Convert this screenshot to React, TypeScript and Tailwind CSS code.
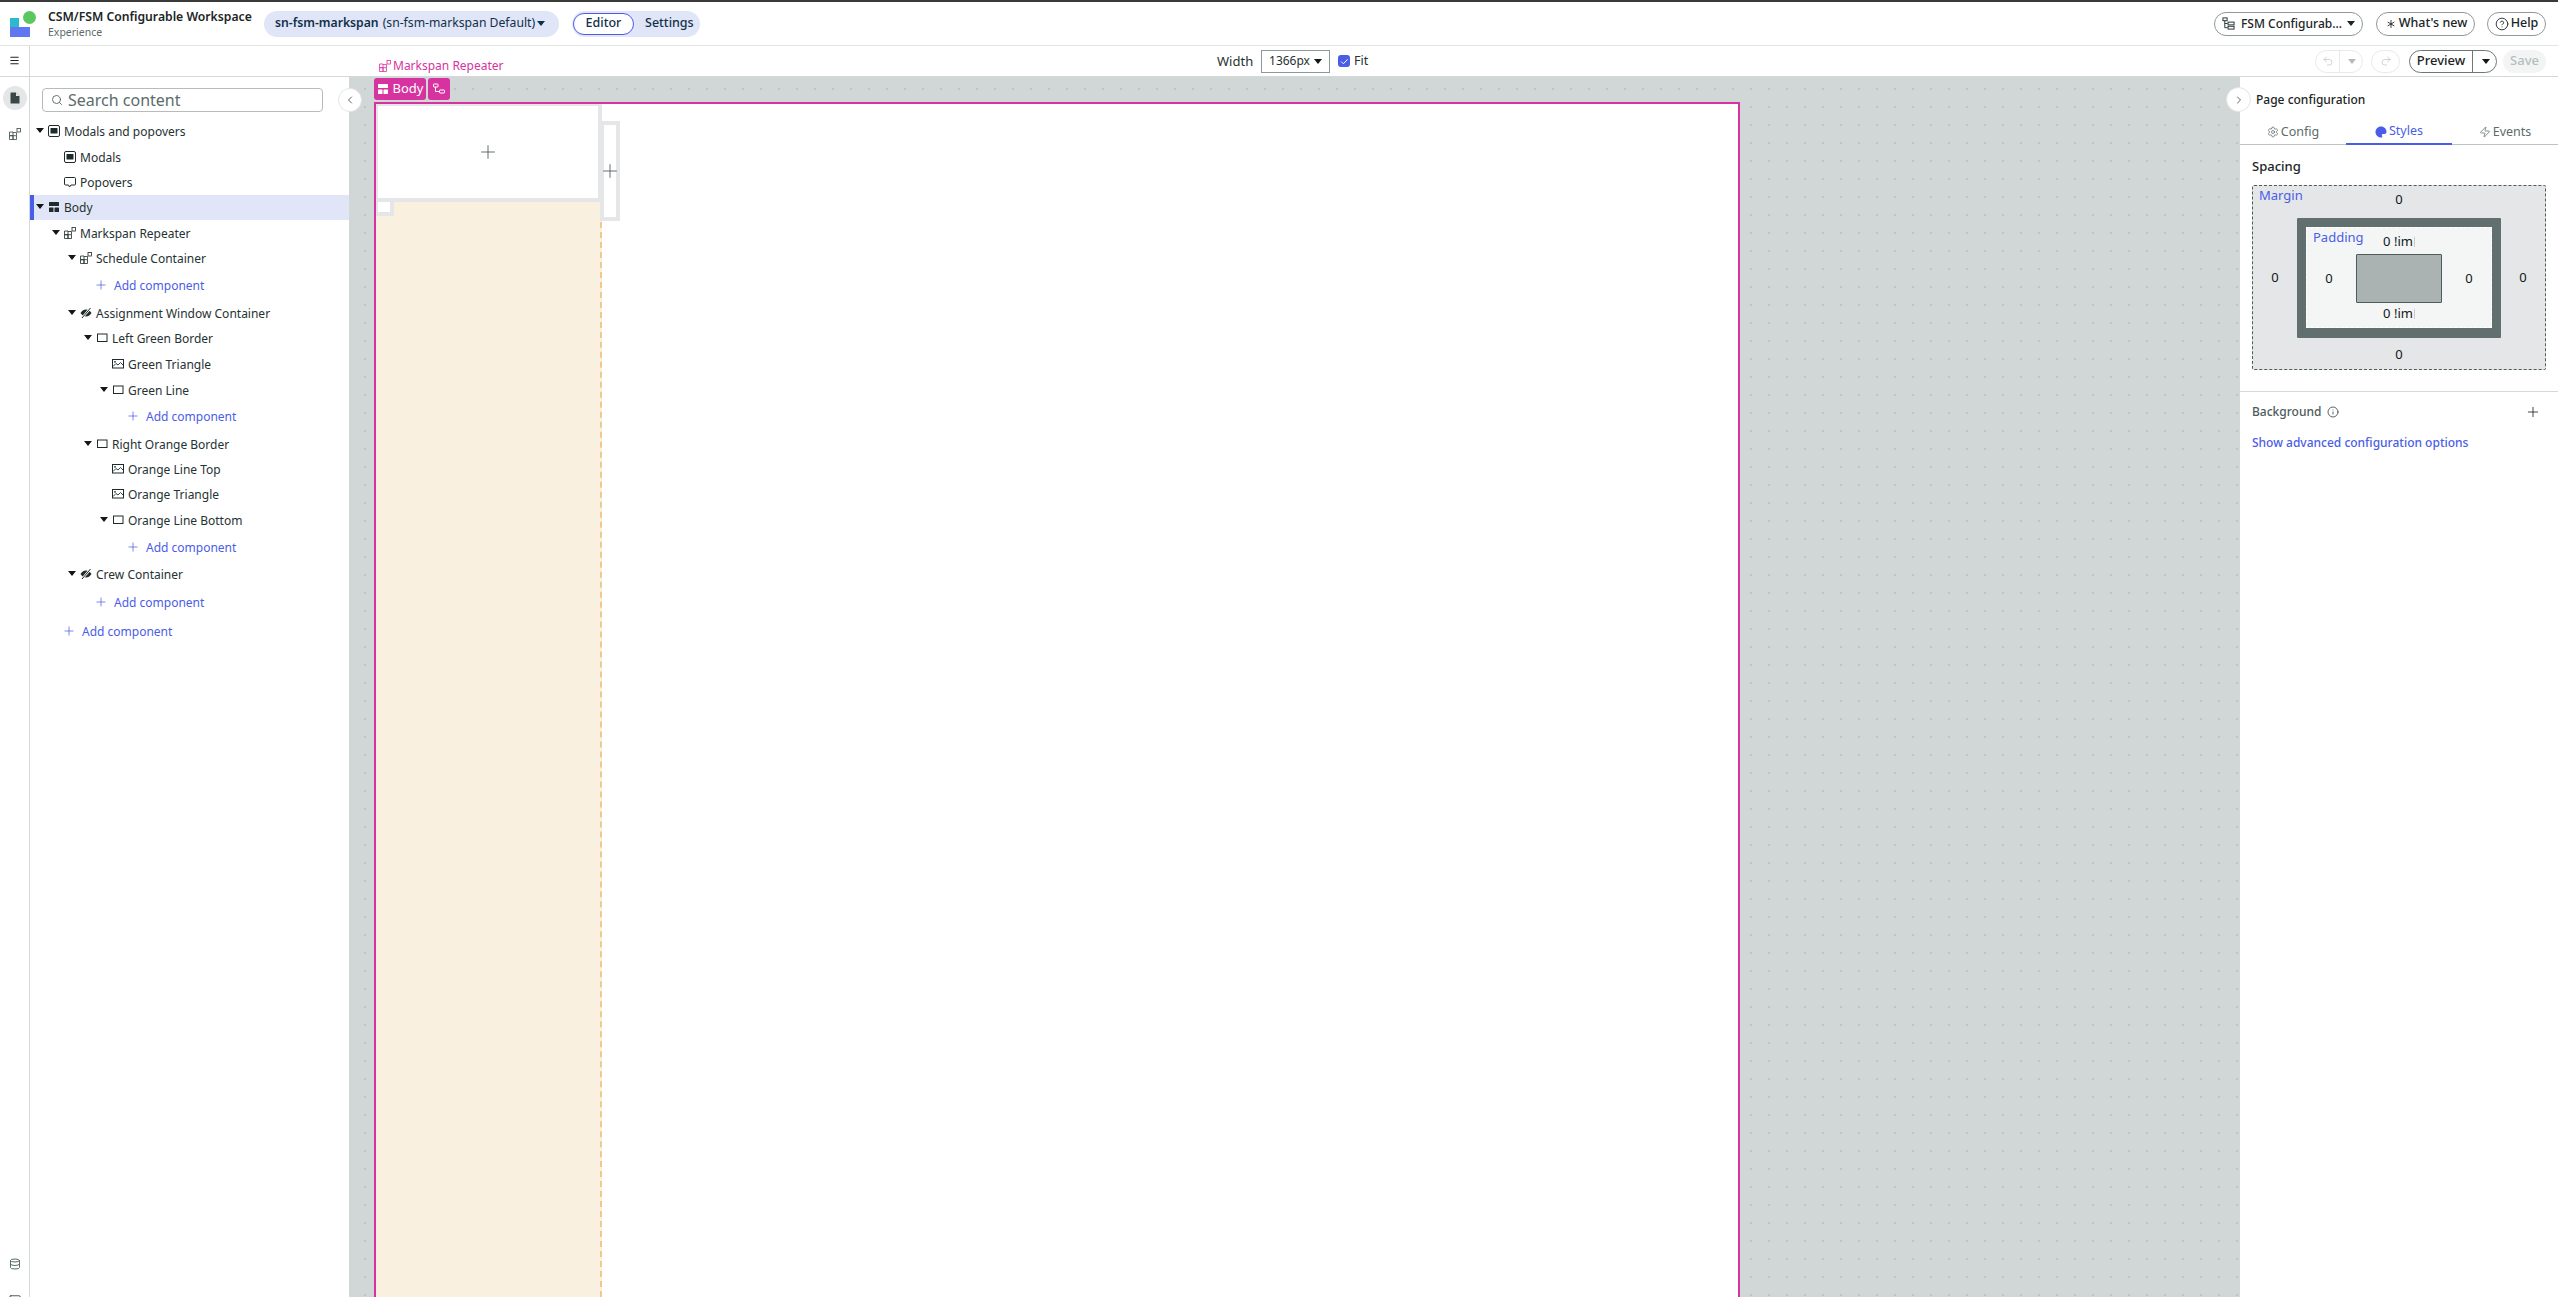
import { Asterisk, ChevronLeft, ChevronRight, CircleHelp, Database, Info, Menu, Plus, Redo2, Search, Settings, SquareTerminal, Undo2, Zap } from "lucide-react";

const Caret = ({ className = "" }: { className?: string }) => (
  <svg viewBox="0 0 8 5" className={`w-[8px] h-[5px] shrink-0 ${className}`}>
    <polygon points="0,0 8,0 4,5" fill="currentColor" />
  </svg>
);

const ModalIcon = () => (
  <svg viewBox="0 0 12 12" className="w-[12px] h-[12px] shrink-0">
    <rect x="0.5" y="0.5" width="11" height="11" rx="1.5" fill="none" stroke="#1f2a2a" />
    <rect x="2.5" y="3" width="7" height="5.5" rx="0.5" fill="#1f2a2a" />
  </svg>
);

const PopoverIcon = () => (
  <svg viewBox="0 0 12 12" className="w-[12px] h-[12px] shrink-0">
    <path d="M1.5 1.5h9a1 1 0 0 1 1 1v5.5a1 1 0 0 1-1 1H7L5.5 11 4.5 9h-3a1 1 0 0 1-1-1V2.500a1 1 0 0 1 1-1z" fill="none" stroke="#1f2a2a" />
  </svg>
);

const BodyIcon = ({ color = "#1f2a2a" }: { color?: string }) => (
  <svg viewBox="0 0 12 12" className="w-[12px] h-[12px] shrink-0">
    <rect x="1" y="1" width="10" height="4" rx="0.5" fill={color} />
    <rect x="1" y="6.500" width="4.500" height="4.500" rx="0.5" fill={color} />
    <rect x="6.500" y="6.500" width="4.500" height="4.500" rx="0.5" fill={color} />
  </svg>
);

const RepeaterIcon = ({ color = "#1f2a2a", className = "w-[12px] h-[12px]" }: { color?: string; className?: string }) => (
  <svg viewBox="0 0 12 12" className={`shrink-0 ${className}`}>
    <path d="M0.500 4H4V7.700H0.500zM0.500 7.700H4V11.500H0.500zM4 7.700H7.500V11.500H4zM4 4.500H7.500V7.700" fill="none" stroke={color} strokeWidth="0.8" />
    <rect x="8" y="0.500" width="3.500" height="3.500" fill="none" stroke={color} strokeWidth="0.8" />
  </svg>
);

const HiddenIcon = () => (
  <svg viewBox="0 0 12 12" className="w-[12px] h-[12px] shrink-0">
    <path d="M0.500 6C2 3.500 4 2.500 6 2.500S10 3.500 11.500 6C10 8.500 8 9.500 6 9.500S2 8.500 0.500 6z" fill="#1f2a2a" />
    <path d="M2 11L10.500 1" stroke="#ffffff" strokeWidth="2.200" />
    <path d="M2 11L10.500 1" stroke="#1f2a2a" strokeWidth="1" />
  </svg>
);

const BoxIcon = () => (
  <svg viewBox="0 0 12 12" className="w-[12px] h-[12px] shrink-0">
    <rect x="1.500" y="2" width="9.500" height="7.500" fill="none" stroke="#1f2a2a" />
  </svg>
);

const ImageIcon = () => (
  <svg viewBox="0 0 12 12" className="w-[12px] h-[12px] shrink-0">
    <rect x="0.500" y="1.500" width="11" height="8.500" fill="none" stroke="#1f2a2a" />
    <path d="M1 8.500L4 5.500l2 1.500 2.500-2.500L11 7" fill="none" stroke="#1f2a2a" strokeWidth="0.9" />
    <circle cx="3" cy="3.800" r="0.900" fill="#1f2a2a" />
  </svg>
);

const DocIcon = () => (
  <svg viewBox="0 0 12 12" className="w-[12px] h-[12px]">
    <path d="M2 0.500h5L10.500 4v7a0.500 0.500 0 0 1-0.500 0.500H2a0.500 0.500 0 0 1-0.500-0.500V1a0.500 0.500 0 0 1 0.500-0.500z" fill="#3a4747" />
    <path d="M7 0.500V4h3.500z" fill="#e4e6e7" />
  </svg>
);

const TreeIcon = ({ className = "w-[14px] h-[14px]", color = "#1f2a2a" }: { className?: string; color?: string }) => (
  <svg viewBox="0 0 14 14" className={className}>
    <rect x="1" y="1" width="4.500" height="3" fill="none" stroke={color} />
    <path d="M3 4v7.500h3M3 7h3" fill="none" stroke={color} />
    <rect x="6.500" y="5.500" width="6.500" height="3" fill="none" stroke={color} />
    <rect x="6.500" y="10" width="6.500" height="3" fill="none" stroke={color} />
  </svg>
);

const BranchIcon = () => (
  <svg viewBox="0 0 12 12" className="w-[12px] h-[12px]">
    <rect x="0.500" y="1" width="4.500" height="3" rx="0.500" fill="none" stroke="#ffffff" />
    <path d="M2.500 4v4.500h4" fill="none" stroke="#ffffff" />
    <rect x="6.500" y="7" width="5" height="3" rx="0.500" fill="none" stroke="#ffffff" />
  </svg>
);

const PaletteIcon = () => (
  <svg viewBox="0 0 12 12" className="w-[12px] h-[12px]">
    <path d="M6 0.500C2.800 0.500 0.500 3 0.500 6s2.500 5.500 5.500 5.500c1.500 0 1.500-1 1-1.800-0.500-0.900 0-1.700 1-1.700h1.500c1.200 0 2-0.800 2-2C11.500 2.800 9.200 0.500 6 0.500z" fill="#4a5de8" />
  </svg>
);

type Row = { label: string; depth: number; icon?: string; caret?: boolean; add?: boolean; gap: string; active?: boolean };

const rows: Row[] = [
  { label: "Modals and popovers", depth: 0, icon: "modal", caret: true, gap: "mt-0" },
  { label: "Modals", depth: 1, icon: "modal", gap: "mt-px" },
  { label: "Popovers", depth: 1, icon: "popover", gap: "mt-0" },
  { label: "Body", depth: 0, icon: "body", caret: true, active: true, gap: "mt-0" },
  { label: "Markspan Repeater", depth: 1, icon: "repeater", caret: true, gap: "mt-px" },
  { label: "Schedule Container", depth: 2, icon: "repeater", caret: true, gap: "mt-0" },
  { label: "Add component", depth: 2, add: true, gap: "mt-[2px]" },
  { label: "Assignment Window Container", depth: 2, icon: "hidden", caret: true, gap: "mt-[3px]" },
  { label: "Left Green Border", depth: 3, icon: "box", caret: true, gap: "mt-0" },
  { label: "Green Triangle", depth: 4, icon: "image", gap: "mt-px" },
  { label: "Green Line", depth: 4, icon: "box", caret: true, gap: "mt-px" },
  { label: "Add component", depth: 4, add: true, gap: "mt-px" },
  { label: "Right Orange Border", depth: 3, icon: "box", caret: true, gap: "mt-[3px]" },
  { label: "Orange Line Top", depth: 4, icon: "image", gap: "mt-0" },
  { label: "Orange Triangle", depth: 4, icon: "image", gap: "mt-0" },
  { label: "Orange Line Bottom", depth: 4, icon: "box", caret: true, gap: "mt-px" },
  { label: "Add component", depth: 4, add: true, gap: "mt-[2px]" },
  { label: "Crew Container", depth: 2, icon: "hidden", caret: true, gap: "mt-[2px]" },
  { label: "Add component", depth: 2, add: true, gap: "mt-[3px]" },
  { label: "Add component", depth: 0, add: true, gap: "mt-[4px]" },
];

const indents = ["pl-[6px]", "pl-[22px]", "pl-[38px]", "pl-[54px]", "pl-[70px]"];

function TreeRow({ row }: { row: Row }) {
  if (row.add) {
    return (
      <div className={`h-[25px] flex items-center text-[12px] text-[#4a5de8] ${row.gap} ${indents[row.depth]}`}>
        <Plus className="w-[14px] h-[14px] ml-[26px] mr-[6px] mb-[2px] shrink-0" strokeWidth={1.25} />
        <span>{row.label}</span>
      </div>
    );
  }
  return (
    <div className={`h-[25px] flex items-center text-[12px] text-[#263232] ${row.gap} ${indents[row.depth]} ${row.active ? "bg-[#e0e6f7] shadow-[inset_4px_0_0_#4a5de8]" : ""}`}>
      <Caret className={`mr-[4px] mb-[2px] text-[#111818] ${row.caret ? "" : "invisible"}`} />
      <span className="mr-[4px] mb-[2px]">
        {row.icon === "modal" && <ModalIcon />}
        {row.icon === "popover" && <PopoverIcon />}
        {row.icon === "body" && <BodyIcon />}
        {row.icon === "repeater" && <RepeaterIcon />}
        {row.icon === "hidden" && <HiddenIcon />}
        {row.icon === "box" && <BoxIcon />}
        {row.icon === "image" && <ImageIcon />}
      </span>
      <span>{row.label}</span>
    </div>
  );
}

function PillButton({ children, className = "" }: { children: React.ReactNode; className?: string }) {
  return (
    <button className={`h-[24px] flex items-center justify-center rounded-full border border-[#8f9999] font-medium text-[#1b2525] whitespace-nowrap ${className}`}>
      {children}
    </button>
  );
}

function Header() {
  return (
    <div className="h-[44px] shrink-0 flex items-center border-b border-[#e3e5e5] bg-white">
      <div className="relative w-[48px] h-[43px] shrink-0">
        <div className="absolute left-[10px] top-[16px] w-[9px] h-[10px] bg-[#2bb9cc]" />
        <div className="absolute left-[10px] top-[25px] w-[20px] h-[10px] bg-[#5f78f2]" />
        <div className="absolute left-[23px] top-[9px] w-[13px] h-[13px] rounded-full bg-[#5bc85f]" />
      </div>
      <div className="w-[216px] shrink-0 flex flex-col leading-none whitespace-nowrap">
        <span className="text-[12.200px] font-semibold text-[#1b2525] leading-[17px]">CSM/FSM Configurable Workspace</span>
        <span className="text-[10.500px] text-[#5c6b6b] leading-[15px]">Experience</span>
      </div>
      <div className="w-[295px] h-[26px] shrink-0 flex items-center rounded-full bg-[#e0e6f7] pl-[11px] text-[12.200px] text-[#10304a] whitespace-nowrap">
        <span className="font-semibold">sn-fsm-markspan</span>
        <span className="ml-[4px]">(sn-fsm-markspan Default)</span>
        <Caret className="ml-[2px]" />
      </div>
      <div className="ml-[13px] w-[128px] h-[26px] shrink-0 flex items-center rounded-full bg-[#e0e6f7] text-[12.500px] text-[#10304a]">
        <span className="ml-[1px] w-[61px] h-[22px] flex items-center justify-center rounded-full bg-white border border-[#4a5de8] font-medium">Editor</span>
        <span className="ml-[11px] font-medium">Settings</span>
      </div>
      <div className="ml-auto flex items-center mr-[12px]">
        <PillButton className="w-[149px] text-[12px]">
          <TreeIcon className="w-[13px] h-[13px] mr-[6px]" />
          FSM Configurab...
          <Caret className="ml-[5px]" />
        </PillButton>
        <PillButton className="w-[99px] ml-[13px] text-[12.500px]">
          <Asterisk className="w-[14px] h-[14px] mr-[1px]" strokeWidth={1.5} />
          What's new
        </PillButton>
        <PillButton className="w-[59px] ml-[12px] text-[12.500px]">
          <CircleHelp className="w-[14px] h-[14px] mr-[2px]" strokeWidth={1.5} />
          Help
        </PillButton>
      </div>
    </div>
  );
}

function SubBar() {
  return (
    <div className="h-[31px] shrink-0 flex items-center border-b border-[#d5d8d8] bg-white">
      <div className="w-[30px] h-full shrink-0 flex items-center justify-center border-r border-[#d5d8d8]">
        <Menu className="w-[11px] h-[11px] mb-[2px] text-[#1b2525]" strokeWidth={2.5} />
      </div>
      <div className="ml-[349px] mt-[10px] w-[838px] shrink-0 flex items-center text-[12px] text-[#d633a0]">
        <RepeaterIcon color="#d633a0" className="w-[12px] h-[12px] mr-[2px]" />
        Markspan Repeater
      </div>
      <span className="text-[13px] text-[#263232] w-[44px] shrink-0 pt-px">Width</span>
      <div className="w-[69px] h-[23px] shrink-0 flex items-center justify-center border border-[#8a9a9a] text-[12px] text-[#263232]">
        1366px
        <Caret className="ml-[4px] text-[#111818]" />
      </div>
      <div className="ml-[8px] w-[12px] h-[12px] shrink-0 flex items-center justify-center rounded-[3px] bg-[#4a5de8]">
        <svg viewBox="0 0 10 10" className="w-[9px] h-[9px]">
          <path d="M1.500 5.200l2.300 2.300 4.700-5" fill="none" stroke="#ffffff" strokeWidth="1.100" />
        </svg>
      </div>
      <span className="ml-[4px] text-[12.500px] text-[#263232] pt-px">Fit</span>
      <div className="ml-auto mr-[12px] flex items-center">
        <div className="w-[48px] h-[23px] flex items-center rounded-full border border-[#e8eaea]">
          <div className="w-[24px] h-full flex items-center justify-center border-r border-[#e8eaea]">
            <Undo2 className="w-[12px] h-[12px] text-[#b3baba]" strokeWidth={1.25} />
          </div>
          <Caret className="ml-[8px] text-[#b3baba]" />
        </div>
        <div className="ml-[8px] w-[29px] h-[23px] flex items-center justify-center rounded-full border border-[#e8eaea]">
          <Redo2 className="w-[12px] h-[12px] text-[#b3baba]" strokeWidth={1.25} />
        </div>
        <div className="ml-[9px] w-[88px] h-[23px] flex items-center rounded-full border border-[#6c7878] text-[13px] font-medium text-[#1b2525]">
          <span className="w-[63px] h-full flex items-center justify-center border-r border-[#6c7878]">Preview</span>
          <Caret className="ml-[9px] text-[#111818]" />
        </div>
        <div className="ml-[6px] w-[43px] h-[23px] flex items-center justify-center rounded-full bg-[#f3f5f5] text-[13px] font-medium text-[#b6bdbd]">Save</div>
      </div>
    </div>
  );
}

function Rail() {
  return (
    <div className="w-[30px] shrink-0 flex flex-col items-center border-r border-[#d5d8d8] bg-white relative overflow-hidden">
      <div className="mt-[9px] w-[24px] h-[24px] rounded-full bg-[#e4e6e7] flex items-center justify-center">
        <DocIcon />
      </div>
      <div className="mt-[18px]">
        <RepeaterIcon className="w-[12px] h-[12px]" color="#3a4747" />
      </div>
      <div className="mt-auto flex flex-col items-center -mb-[11px]">
        <Database className="w-[12px] h-[12px] text-[#5c6b6b]" strokeWidth={2} />
        <SquareTerminal className="mt-[24px] w-[14px] h-[14px] text-[#3a4747]" strokeWidth={1.5} />
      </div>
    </div>
  );
}

function TreePanel() {
  return (
    <div className="w-[319px] shrink-0 bg-white relative">
      <div className="ml-[12px] mt-[11px] w-[281px] h-[24px] flex items-center rounded-[4px] border border-[#b6bcbc] pl-[8px]">
        <Search className="w-[12px] h-[12px] text-[#3a4747] mr-[5px]" strokeWidth={1.5} />
        <span className="text-[16px] text-[#5c6b6b]">Search content</span>
      </div>
      <div className="mt-[7px]">
        {rows.map((row, i) => (
          <TreeRow key={i} row={row} />
        ))}
      </div>
      <div className="absolute right-[-13px] top-[11px] w-[24px] h-[24px] rounded-full bg-white border border-[#e3e5e5] flex items-center justify-center z-10">
        <ChevronLeft className="w-[12px] h-[12px] text-[#263232]" strokeWidth={1.5} />
      </div>
    </div>
  );
}

function Canvas() {
  return (
    <div className="flex-1 min-w-0 bg-[#d1d6d6] bg-[radial-gradient(circle,#bcc3c4_1px,transparent_1.200px)] bg-[length:18px_18px] bg-[position:7px_3px] pl-[25px] overflow-hidden flex flex-col">
      <div className="h-[25px] shrink-0 flex items-start pt-[1px]">
        <div className="w-[52px] h-[22px] flex items-center justify-center rounded-[3px] bg-[#d633a0] text-[13px] text-white">
          <BodyIcon color="#ffffff" />
          <span className="ml-[4px]">Body</span>
        </div>
        <div className="ml-[2px] w-[22px] h-[22px] flex items-center justify-center rounded-[3px] bg-[#d633a0]">
          <BranchIcon />
        </div>
      </div>
      <div className="w-[1366px] flex-1 flex border-t-2 border-x-2 border-[#d633a0] bg-white relative">
        <div className="w-[226px] shrink-0 flex flex-col">
          <div className="h-[98px] shrink-0 flex items-center justify-center bg-white border-t-2 border-l-2 border-r-4 border-b-4 border-[#e4e6e7]">
            <Plus className="w-[22px] h-[22px] text-[#566363]" strokeWidth={1} />
          </div>
          <div className="flex-1 bg-[#f9f0df] border-r-2 border-dashed border-[#f0c98f]" />
          <div className="absolute left-0 top-[98px] w-[18px] h-[14px] bg-white border-l-2 border-r-4 border-b-4 border-[#e4e6e7]" />
        </div>
        <div className="-ml-[2px] mt-[17px] w-[20px] h-[100px] relative flex items-center justify-center bg-white border-4 border-[#e4e6e7]">
          <Plus className="w-[22px] h-[22px] text-[#566363] shrink-0" strokeWidth={1} />
        </div>
      </div>
    </div>
  );
}

function ConfigPanel() {
  return (
    <div className="w-[318px] shrink-0 bg-white relative">
      <div className="absolute left-[-14px] top-[10px] w-[25px] h-[25px] rounded-full bg-white border border-[#e3e5e5] flex items-center justify-center">
        <ChevronRight className="w-[12px] h-[12px] text-[#263232]" strokeWidth={1.5} />
      </div>
      <div className="pl-[16px] pt-[14px] h-[43px] text-[12px] font-medium text-[#1b2525]">Page configuration</div>
      <div className="h-[25px] flex border-b border-[#bcc3c4] text-[12.500px] text-[#5c6b6b]">
        <div className="w-[106px] flex items-center justify-center">
          <Settings className="w-[12px] h-[12px] mr-[2px]" strokeWidth={1.5} />
          Config
        </div>
        <div className="w-[106px] flex items-center justify-center text-[#4a5de8] border-b-2 border-[#4a5de8] h-[25px]">
          <PaletteIcon />
          <span className="ml-[2px]">Styles</span>
        </div>
        <div className="w-[106px] flex items-center justify-center">
          <Zap className="w-[12px] h-[12px] mr-[2px]" strokeWidth={1.5} />
          Events
        </div>
      </div>
      <div className="mt-[12px] pl-[12px] text-[13px] font-medium text-[#1b2525] leading-[18px]">Spacing</div>
      <div className="mt-[10px] ml-[12px] w-[294px] h-[185px] border border-dashed border-[#4f5c5c] bg-[#e4e6e7] rounded-[2px] relative">
        <span className="absolute left-[6px] top-0 text-[13px] text-[#4a5de8]">Margin</span>
        <div className="h-[32px] pb-[4px] flex items-center justify-center text-[13px] text-[#111818]">0</div>
        <div className="flex items-center h-[120px]">
          <div className="w-[44px] text-center text-[13px] text-[#111818]">0</div>
          <div className="w-[204px] h-[120px] bg-[#626f6f] rounded-[1px] p-[9px]">
            <div className="w-[186px] h-[101px] border border-dashed border-white bg-[#f4f6f6] relative flex flex-col items-center">
              <span className="absolute left-[6px] top-0 text-[13px] text-[#4a5de8]">Padding</span>
              <div className="h-[26px] pt-[2px] flex items-center text-[13px] text-[#111818]">0 !im<span className="ml-px w-px h-[10px] bg-[#c9cdcd]" /></div>
              <div className="flex items-center w-full">
                <div className="w-[49px] pr-[5px] text-center text-[13px] text-[#111818]">0</div>
                <div className="w-[86px] h-[49px] bg-[#abb2b2] border border-[#4f5c5c] rounded-[1px]" />
                <div className="w-[49px] pl-[5px] text-center text-[13px] text-[#111818]">0</div>
              </div>
              <div className="h-[21px] flex items-center text-[13px] text-[#111818]">0 !im<span className="ml-px w-px h-[10px] bg-[#c9cdcd]" /></div>
            </div>
          </div>
          <div className="w-[44px] text-center text-[13px] text-[#111818]">0</div>
        </div>
        <div className="h-[31px] pt-[3px] flex items-center justify-center text-[13px] text-[#111818]">0</div>
      </div>
      <div className="mt-[21px] border-t border-[#d5d8d8]" />
      <div className="mt-[10px] px-[12px] flex items-center h-[20px] text-[12px] font-medium text-[#4e5b5b]">
        Background
        <Info className="ml-[6px] w-[12px] h-[12px] text-[#263232]" strokeWidth={1.5} />
        <Plus className="ml-auto mr-[5px] w-[16px] h-[16px] text-[#1b2525]" strokeWidth={1.25} />
      </div>
      <div className="mt-[12px] pl-[12px] text-[12px] font-medium text-[#4a5de8] leading-[18px]">Show advanced configuration options</div>
    </div>
  );
}

export default function App() {
  return (
    <div className="w-full h-screen flex flex-col overflow-hidden border-t-2 border-[#3a3a3a] bg-white font-['Noto_Sans',sans-serif]">
      <Header />
      <SubBar />
      <div className="flex-1 min-h-0 flex">
        <Rail />
        <TreePanel />
        <Canvas />
        <ConfigPanel />
      </div>
    </div>
  );
}
